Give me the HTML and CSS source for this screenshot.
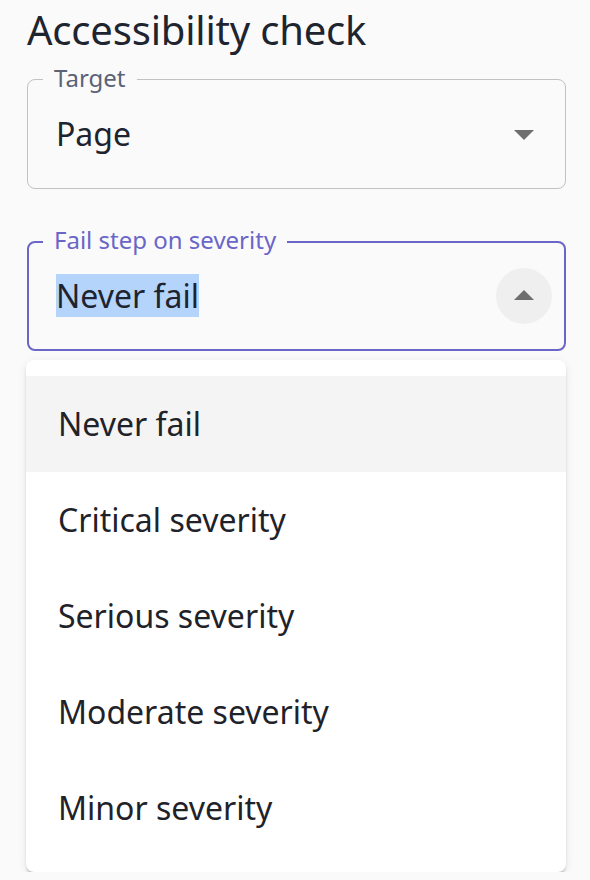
FILE: index.html
```html
<!DOCTYPE html>
<html lang="en">
<head>
<meta charset="utf-8">
<title>Accessibility check</title>
<link rel="stylesheet" href="styles.css">
</head>
<body>
  <h1 class="title">Accessibility check</h1>

  <div class="field">
    <span class="field-label">Target</span>
    <span class="field-value">Page</span>
    <span class="adornment">
      <svg class="arrow" viewBox="0 0 24 24" aria-hidden="true"><path d="M7 10l5 5 5-5z"/></svg>
    </span>
  </div>

  <div class="field field-focused">
    <span class="field-label">Fail step on severity</span>
    <span class="field-value"><span class="selected-text">Never fail</span></span>
    <span class="adornment adornment-active">
      <svg class="arrow" viewBox="0 0 24 24" aria-hidden="true"><path d="M7 14l5-5 5 5z"/></svg>
    </span>
  </div>

  <ul class="menu">
    <li class="menu-item menu-item-active">Never fail</li>
    <li class="menu-item">Critical severity</li>
    <li class="menu-item">Serious severity</li>
    <li class="menu-item">Moderate severity</li>
    <li class="menu-item">Minor severity</li>
  </ul>
</body>
</html>
```
FILE: styles.css
```css
* {
  box-sizing: border-box;
}

html, body {
  background: #fafafa;
}

body {
  margin: 0;
  padding: 0 24px 0 27px;
  font-family: "Noto Sans", "Open Sans", sans-serif;
  color: #1e2530;
}

.title {
  margin: 6px 0 0;
  font-size: 40px;
  line-height: 48px;
  font-weight: 400;
  letter-spacing: -0.2px;
  color: #1e2530;
}

.field {
  position: relative;
  display: flex;
  align-items: center;
  height: 110px;
  margin-top: 25px;
  padding: 0 13px 0 28px;
  border: 1px solid #c2c2c2;
  border-radius: 8px;
}

.field-focused {
  margin-top: 52px;
  padding: 0 12px 0 27px;
  border: 2px solid #6a66c8;
}

.field-label {
  position: absolute;
  left: 15px;
  top: -14px;
  padding: 0 11px;
  background: #fafafa;
  font-size: 24px;
  line-height: 24px;
  color: #5a6376;
}

.field-focused .field-label {
  left: 14px;
  top: -15px;
  color: #6a66c8;
}

.field-value {
  flex: 1;
  font-size: 32px;
  line-height: 46px;
  color: #1d2430;
}

.selected-text {
  background: #b5d4fb;
}

.adornment {
  display: flex;
  align-items: center;
  justify-content: center;
  width: 56px;
  height: 56px;
  margin: -5px 0;
  border-radius: 50%;
}

.adornment-active {
  background: #efefef;
}

.arrow {
  width: 48px;
  height: 48px;
  fill: #6e6e6e;
}

.menu {
  list-style: none;
  margin: 9px 0 0 -1px;
  padding: 16px 0;
  background: #ffffff;
  border-radius: 8px;
  box-shadow: 0 3px 3px -1px rgba(0, 0, 0, 0.25), 0 2px 10px rgba(0, 0, 0, 0.08);
}

.menu-item {
  height: 96px;
  display: flex;
  align-items: center;
  padding-left: 32px;
  font-size: 32px;
  line-height: 46px;
  color: #1f2329;
}

.menu-item-active {
  background: #f4f4f4;
}
```
